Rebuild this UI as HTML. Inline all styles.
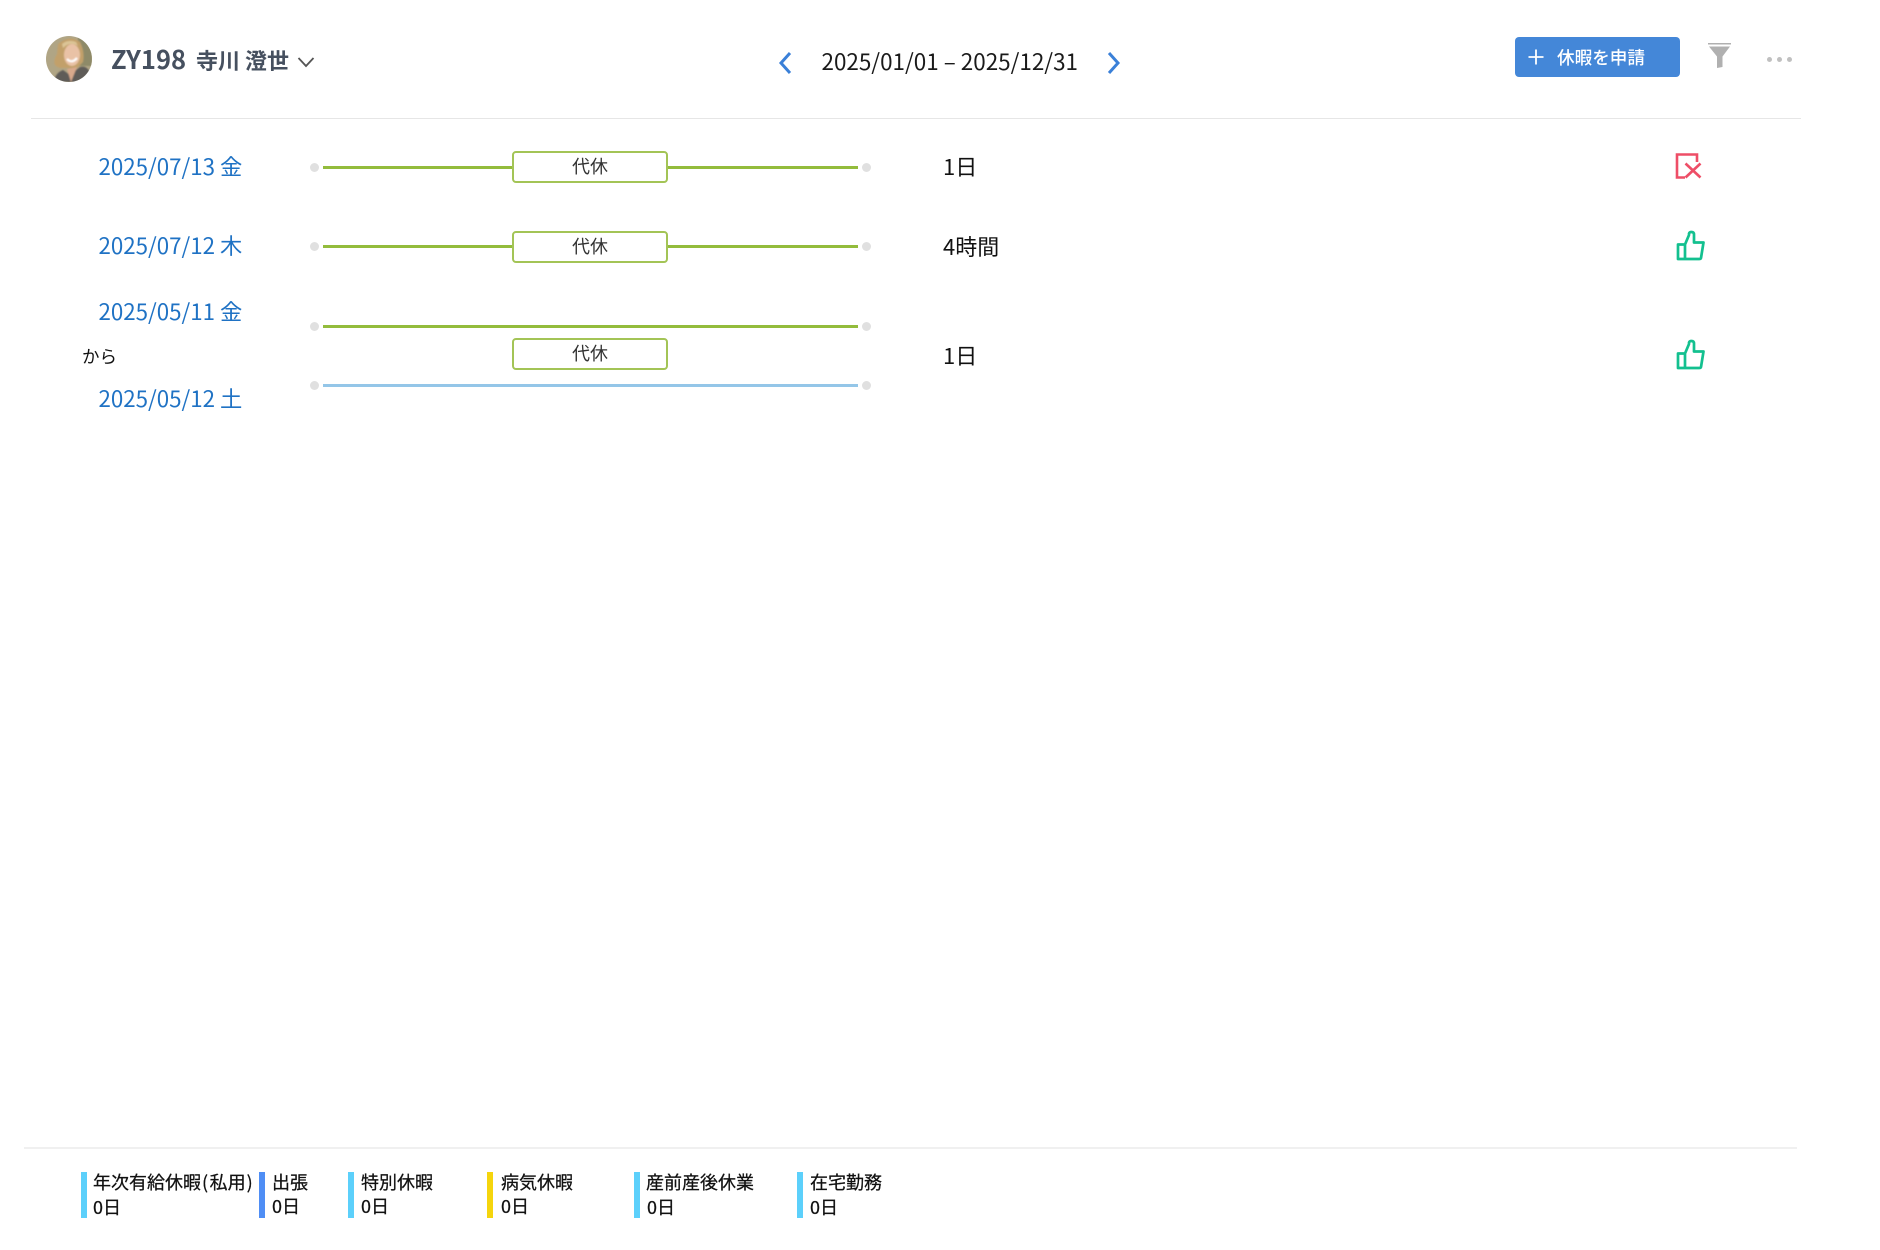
<!DOCTYPE html>
<html lang="ja">
<head>
<meta charset="utf-8">
<title>休暇</title>
<style>
html,body{margin:0;padding:0;background:#fff;}
body{width:1880px;height:1250px;position:relative;overflow:hidden;font-family:"Liberation Sans","Noto Sans CJK JP",sans-serif;}
.t{position:absolute;white-space:nowrap;font-family:"Noto Sans CJK JP",sans-serif;line-height:1;}
.r{position:absolute;}
.date{left:98.5px;font-size:22.3px;color:#1f72c4;}
.dur{left:943px;font-size:22px;color:#111;}
.dot{position:absolute;width:9px;height:9px;border-radius:50%;background:#e0e0e0;}
.lg{position:absolute;height:3px;background:#93bc3c;}
.lb{position:absolute;height:3px;background:#94c6e8;}
.box{position:absolute;left:512px;width:152px;height:28px;border:2px solid #a3c456;border-radius:4px;background:#fff;text-align:center;font-family:"Noto Sans CJK JP",sans-serif;font-size:18px;line-height:27px;color:#333;}
.bar{position:absolute;top:1172px;width:6px;height:46px;}
.lt{font-size:18px;color:#111;-webkit-text-stroke:0.25px #111;}
</style>
</head>
<body>
<svg class="r" style="left:46px;top:36px" width="46" height="46" viewBox="0 0 46 46">
<defs><clipPath id="c"><circle cx="23" cy="23" r="23"/></clipPath><filter id="b"><feGaussianBlur stdDeviation="0.7"/></filter></defs>
<g clip-path="url(#c)"><rect width="46" height="46" fill="#b0a585"/>
<g filter="url(#b)">
<rect x="32" y="0" width="14" height="30" fill="#8e8a68"/>
<path d="M12 8Q24 -2 34 6Q39 16 37 26L31 32H15Q4 30 11 18Z" fill="#c2a06a"/>
<path d="M17 12Q24 5 32 10L30 6Q22 3 16 8Z" fill="#dcc596"/>
<ellipse cx="26" cy="19" rx="8" ry="11" fill="#e9c2a6"/>
<path d="M21 23Q26 28 31 22" stroke="#fff" stroke-width="2.2" fill="none"/>
<path d="M8 46Q9 37 17 34L24 39L34 31Q44 28 46 46Z" fill="#5e5b58"/>
<path d="M21 33L25 46L31 31Z" fill="#d9a98c"/>
</g></g></svg>

<div class="t" style="left:111px;top:46px;font-size:25.5px;font-weight:700;color:#46505f;">ZY198</div>
<div class="t" style="left:196px;top:49px;font-size:22px;font-weight:700;color:#46505f;">寺川 澄世</div>
<svg class="r" style="left:296px;top:55px" width="20" height="14"><path d="M2.5 3L10 11L17.5 3" fill="none" stroke="#555" stroke-width="1.8"/></svg>

<svg class="r" style="left:774px;top:48px" width="22" height="30"><path d="M16 5L7 15L16 25" fill="none" stroke="#3a80d8" stroke-width="3"/></svg>
<div class="t" style="left:821.5px;top:50px;font-size:22.45px;color:#1a1a1a;">2025/01/01 – 2025/12/31</div>
<svg class="r" style="left:1103px;top:48px" width="22" height="30"><path d="M6 5L15 15L6 25" fill="none" stroke="#3a80d8" stroke-width="3"/></svg>

<div class="r" style="left:1515px;top:37px;width:165px;height:40px;background:#4487d8;border-radius:4px;"></div>
<svg class="r" style="left:1528px;top:49px" width="16" height="16"><path d="M8 0.5V15.5M0.5 8H15.5" stroke="#fff" stroke-width="1.8"/></svg>
<div class="t" style="left:1557px;top:49px;font-size:17.6px;font-weight:500;color:#fff;">休暇を申請</div>
<svg class="r" style="left:1706px;top:41px" width="27" height="28"><path d="M2 2H25V3.5H2Z" fill="#b0b0b0"/><path d="M3 5.5H24L16.5 15.5V26L11 27V15.5Z" fill="#b0b0b0"/></svg>
<div class="dot" style="left:1767px;top:57px;width:5px;height:5px;background:#c0c0c0"></div>
<div class="dot" style="left:1777px;top:57px;width:5px;height:5px;background:#c0c0c0"></div>
<div class="dot" style="left:1787px;top:57px;width:5px;height:5px;background:#c0c0c0"></div>

<div class="r" style="left:31px;top:118px;width:1770px;height:1px;background:#e6e6e6;"></div>

<!-- row 1 -->
<div class="t date" style="top:155px">2025/07/13 金</div>
<div class="dot" style="left:310px;top:162.5px"></div>
<div class="lg" style="left:323px;top:165.5px;width:535px"></div>
<div class="dot" style="left:862px;top:162.5px"></div>
<div class="box" style="top:151px">代休</div>
<div class="t dur" style="top:155px">1日</div>
<svg class="r" style="left:1660px;top:140px" width="50" height="50"><path d="M37 22V14.5H17V37.5H25" fill="none" stroke="#ee4e67" stroke-width="2.6"/><path d="M25.5 23.5L40.5 37.5M40.5 23.5L25.5 37.5" fill="none" stroke="#ee4e67" stroke-width="2.6"/></svg>

<!-- row 2 -->
<div class="t date" style="top:234px">2025/07/12 木</div>
<div class="dot" style="left:310px;top:242px"></div>
<div class="lg" style="left:323px;top:245px;width:535px"></div>
<div class="dot" style="left:862px;top:242px"></div>
<div class="box" style="top:231px">代休</div>
<div class="t dur" style="top:235px">4時間</div>
<svg class="r" style="left:1660px;top:221px" width="50" height="50"><path d="M18 23.5H25V38H18ZM25 23.5L29 14V12.5Q29.5 11 31.5 11Q34 11 34 13.5V21.5H43.5L41 37Q40.8 38 39 38H25" fill="none" stroke="#13c08f" stroke-width="2.7" stroke-linejoin="round"/></svg>

<!-- row 3 -->
<div class="t date" style="top:300px">2025/05/11 金</div>
<div class="t" style="left:82px;top:347.5px;font-size:17.5px;color:#111">から</div>
<div class="t date" style="top:387px">2025/05/12 土</div>
<div class="dot" style="left:310px;top:321.5px"></div>
<div class="lg" style="left:323px;top:325px;width:535px"></div>
<div class="dot" style="left:862px;top:321.5px"></div>
<div class="box" style="top:338px">代休</div>
<div class="dot" style="left:310px;top:381px"></div>
<div class="lb" style="left:323px;top:384px;width:535px"></div>
<div class="dot" style="left:862px;top:381px"></div>
<div class="t dur" style="top:344px">1日</div>
<svg class="r" style="left:1660px;top:330px" width="50" height="50"><path d="M18 23.5H25V38H18ZM25 23.5L29 14V12.5Q29.5 11 31.5 11Q34 11 34 13.5V21.5H43.5L41 37Q40.8 38 39 38H25" fill="none" stroke="#13c08f" stroke-width="2.7" stroke-linejoin="round"/></svg>

<!-- legend -->
<div class="r" style="left:24px;top:1147px;width:1773px;height:2px;background:#f0f0f0;"></div>

<div class="bar" style="left:81px;background:#5cd0fb"></div>
<div class="t lt" style="left:93px;top:1173px">年次有給休暇<span style="margin:0 1.5px 0 1px">(</span>私用<span style="margin-left:1px">)</span></div>
<div class="t lt" style="left:93px;top:1198px">0日</div>

<div class="bar" style="left:259px;background:#4f8ef5"></div>
<div class="t lt" style="left:272px;top:1173px">出張</div>
<div class="t lt" style="left:272px;top:1197px">0日</div>

<div class="bar" style="left:348px;background:#5cd0fb"></div>
<div class="t lt" style="left:361px;top:1173px">特別休暇</div>
<div class="t lt" style="left:361px;top:1197px">0日</div>

<div class="bar" style="left:487px;background:#f5d50d"></div>
<div class="t lt" style="left:501px;top:1173px">病気休暇</div>
<div class="t lt" style="left:501px;top:1197px">0日</div>

<div class="bar" style="left:634px;background:#5cd0fb"></div>
<div class="t lt" style="left:646px;top:1173px">産前産後休業</div>
<div class="t lt" style="left:647px;top:1198px">0日</div>

<div class="bar" style="left:797px;background:#5cd0fb"></div>
<div class="t lt" style="left:810px;top:1173px">在宅勤務</div>
<div class="t lt" style="left:810px;top:1198px">0日</div>
</body>
</html>
